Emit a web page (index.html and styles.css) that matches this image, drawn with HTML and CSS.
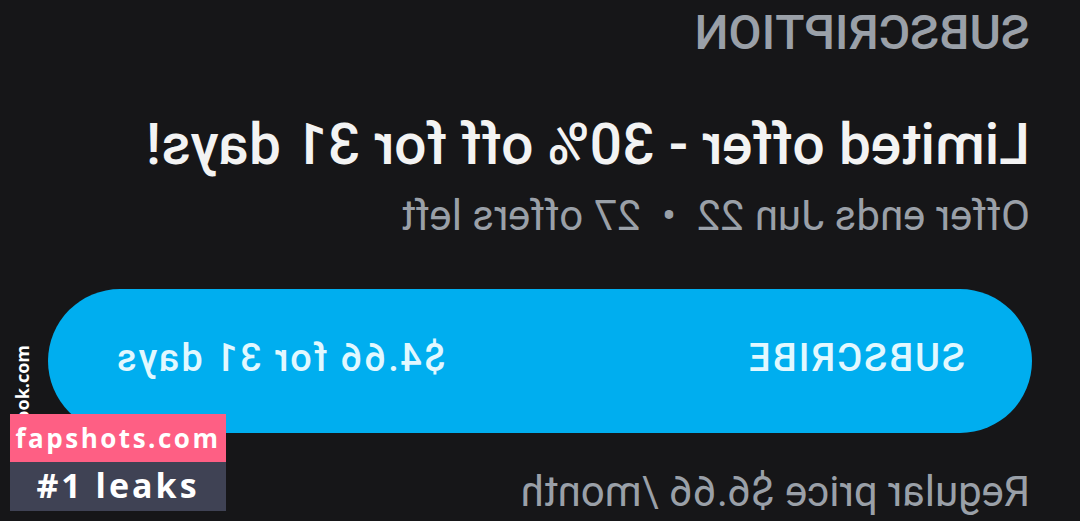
FILE: index.html
```html
<!DOCTYPE html>
<html lang="en">
<head>
<meta charset="utf-8">
<title>Subscription</title>
<link rel="stylesheet" href="styles.css">
</head>
<body>
<div class="screen">
  <main class="mirror">
    <h2 class="label">SUBSCRIPTION</h2>
    <h1 class="offer">Limited offer - 30% off for 31 days!</h1>
    <p class="meta"><span>Offer ends Jun 22</span><span class="dot">•</span><span>27 offers left</span></p>
    <button class="subscribe"><span>SUBSCRIBE</span><span>$4.66 for 31 days</span></button>
    <p class="regular">Regular price $6.66 /month</p>
  </main>
  <div class="vmark">fapbook.com</div>
  <div class="badge">
    <div class="badge-top">fapshots.com</div>
    <div class="badge-bottom">#1 leaks</div>
  </div>
</div>
</body>
</html>
```
FILE: styles.css
```css
html, body {
  margin: 0;
  padding: 0;
  background: #161618;
}
.screen {
  position: relative;
  width: 1080px;
  height: 521px;
  overflow: hidden;
  background: #161618;
  font-family: Roboto, "Liberation Sans", sans-serif;
}
.mirror {
  transform: scaleX(-1);
  display: flex;
  flex-direction: column;
  align-items: flex-start;
  box-sizing: border-box;
  width: 1080px;
  padding: 9px 48px 0 48px;
}
.label {
  margin: 0 0 0 2px;
  font-size: 48px;
  line-height: 1;
  font-weight: 500;
  color: #9aa0a8;
}
.offer {
  margin: 59px 0 0 2px;
  font-size: 57px;
  line-height: 1;
  font-weight: 500;
  color: #f3f3f3;
}
.meta {
  margin: 22px 0 0 2px;
  display: flex;
  font-size: 42px;
  line-height: 1;
  color: #9aa0a8;
}
.dot {
  margin: 0 21px;
}
.subscribe {
  margin-top: 52px;
  width: 984px;
  height: 144px;
  border: 0;
  border-radius: 72px;
  background: #00aeef;
  color: #e2f8ff;
  display: flex;
  justify-content: space-between;
  align-items: center;
  padding: 0 67px 7px 67px;
  box-sizing: border-box;
  font-family: Roboto, "Liberation Sans", sans-serif;
  font-size: 38px;
  font-weight: 500;
  letter-spacing: 2px;
  line-height: 1;
}
.regular {
  margin: 38px 0 0 2px;
  font-size: 42px;
  line-height: 1;
  color: #9aa0a8;
}
.vmark {
  position: absolute;
  left: 13px;
  top: 345px;
  writing-mode: vertical-rl;
  transform: rotate(180deg);
  font-family: "Open Sans", sans-serif;
  font-weight: 700;
  font-size: 18px;
  line-height: 1;
  color: #ffffff;
}
.badge {
  position: absolute;
  left: 10px;
  top: 414px;
  width: 216px;
  display: flex;
  flex-direction: column;
  font-family: "Open Sans", sans-serif;
  font-weight: 700;
  color: #ffffff;
  text-align: center;
}
.badge-top {
  height: 48px;
  background: #fe5f84;
  font-size: 26px;
  line-height: 48px;
  letter-spacing: 2.5px;
}
.badge-bottom {
  height: 49px;
  background: #3f4254;
  font-size: 34px;
  line-height: 47px;
  letter-spacing: 3px;
}
```
